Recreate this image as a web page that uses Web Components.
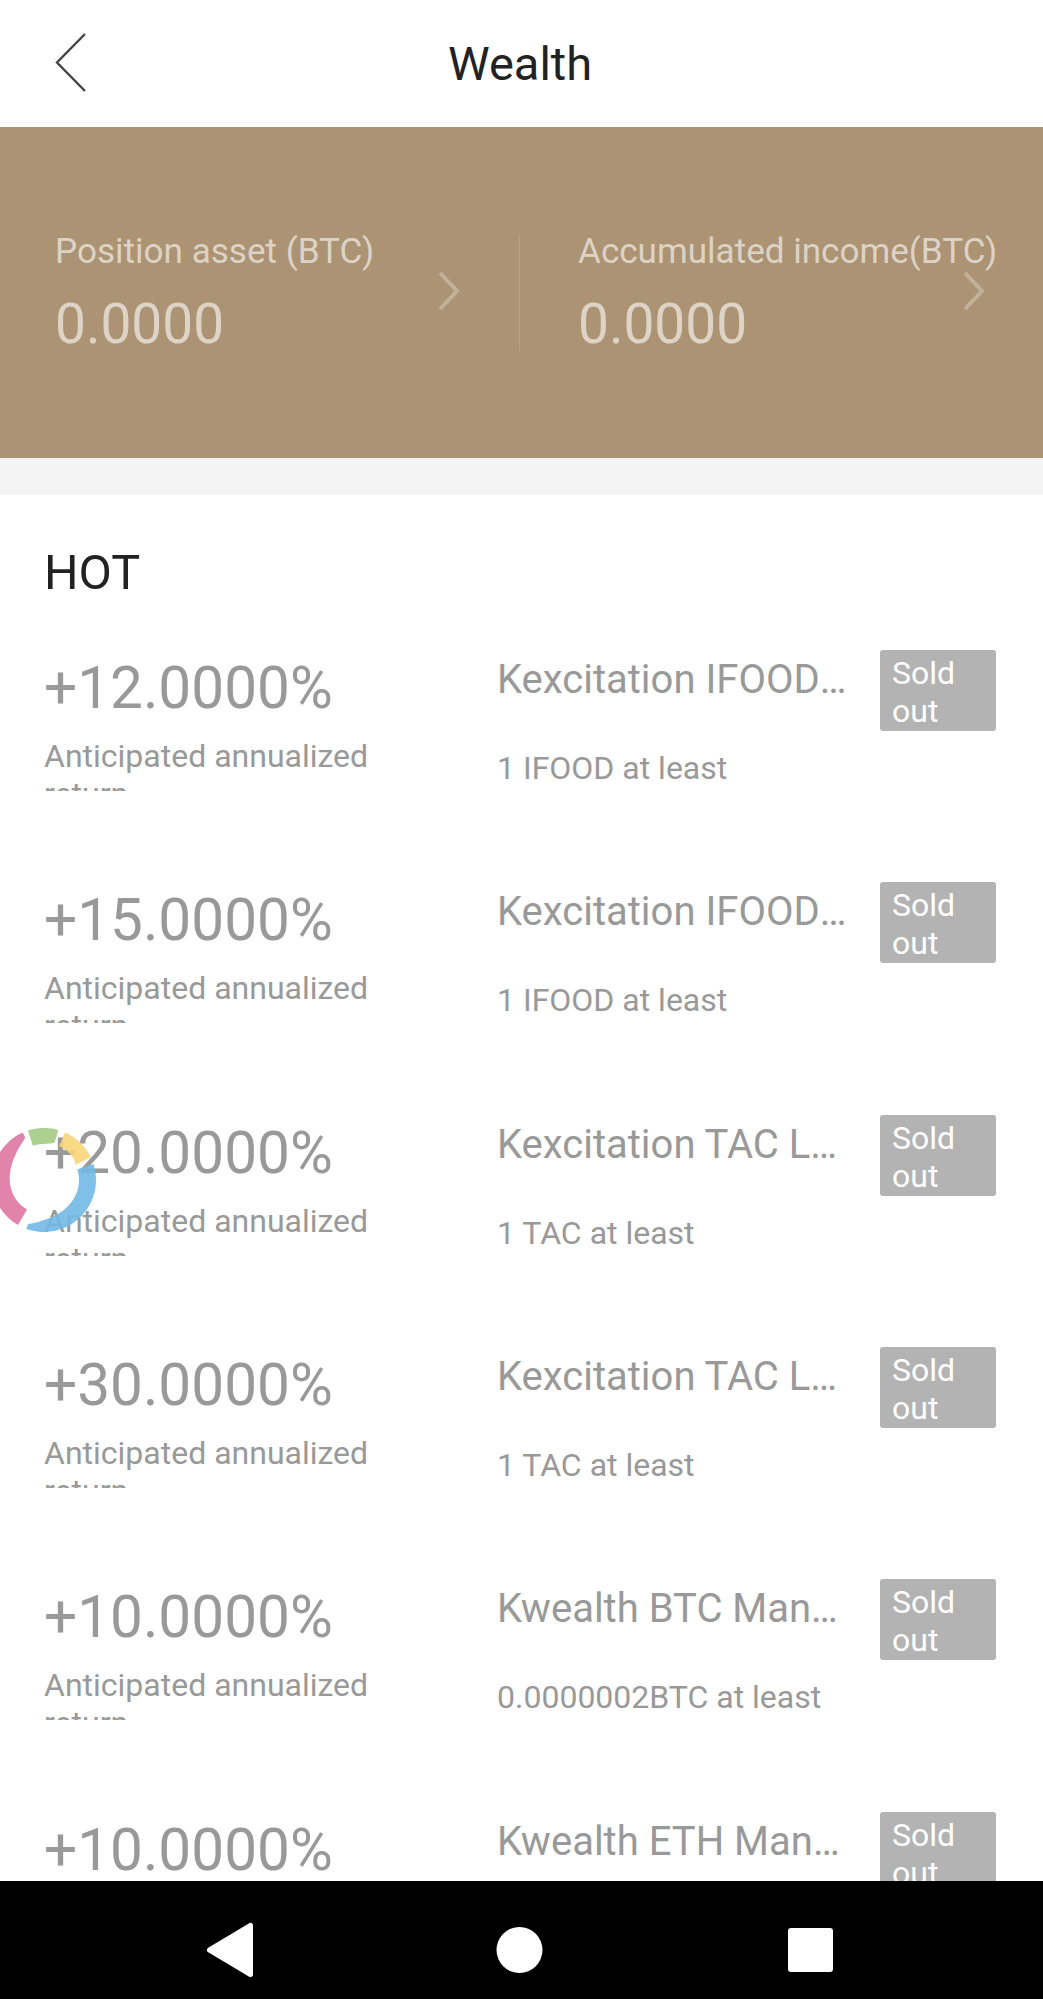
<!DOCTYPE html>
<html>
<head>
<meta charset="utf-8">
<title>Wealth</title>
<style>
html, body { margin: 0; padding: 0; background: #fff; }
body { font-family: Roboto, "Liberation Sans", sans-serif; }
</style>
</head>
<body>
<wealth-app>
    <wealth-header slot="header">Wealth</wealth-header>
    <balance-banner slot="banner">
        <balance-cell label="Position asset (BTC)" value="0.0000"></balance-cell>
        <balance-cell label="Accumulated income(BTC)" value="0.0000"></balance-cell>
    </balance-banner>
    <product-list slot="list" heading="HOT">
        <product-row rate="+12.0000%" name="Kexcitation IFOODLock" least="1 IFOOD at least"></product-row>
        <product-row rate="+15.0000%" name="Kexcitation IFOODLock" least="1 IFOOD at least"></product-row>
        <product-row rate="+20.0000%" name="Kexcitation TAC Lock-up" least="1 TAC at least"></product-row>
        <product-row rate="+30.0000%" name="Kexcitation TAC Lock-up" least="1 TAC at least"></product-row>
        <product-row rate="+10.0000%" name="Kwealth BTC Manager" least="0.0000002BTC at least"></product-row>
        <product-row rate="+10.0000%" name="Kwealth ETH Manager" least="0.0000002ETH at least"></product-row>
    </product-list>
    <loading-ring slot="overlay"></loading-ring>
    <nav-buttons slot="nav"></nav-buttons>
</wealth-app>

<script>
const appTemplate = document.createElement("template");
appTemplate.innerHTML = `
    <style>
    :host {
        display: flex;
        flex-direction: column;
        position: relative;
        height: 1999px;
        overflow: hidden;
        background: #fff;
        font-family: Roboto, "Liberation Sans", sans-serif;
    }
    .gap { height: 37px; flex: none; background: #f4f4f4; }
    .list { flex: 1; min-height: 0; overflow: hidden; }
    </style>
    <slot name="header"></slot>
    <slot name="banner"></slot>
    <div class="gap"></div>
    <div class="list"><slot name="list"></slot></div>
    <slot name="nav"></slot>
    <slot name="overlay"></slot>
`;

class WealthApp extends HTMLElement {
    constructor() {
        super();
        this.attachShadow({mode: "open"}).appendChild(appTemplate.content.cloneNode(true));
    }
}

const headerTemplate = document.createElement("template");
headerTemplate.innerHTML = `
    <style>
    :host {
        display: flex;
        flex: none;
        align-items: center;
        justify-content: center;
        position: relative;
        height: 127px;
        padding-right: 3px;
        color: #222;
        font-size: 47px;
        box-sizing: border-box;
    }
    svg { position: absolute; left: 54px; top: 33px; }
    </style>
    <svg width="33" height="60" viewBox="0 0 33 60" fill="none" stroke="#444" stroke-width="2.4">
        <path d="M31 1 L3 29.5 L31 58"/>
    </svg>
    <span><slot></slot></span>
`;

class WealthHeader extends HTMLElement {
    constructor() {
        super();
        this.attachShadow({mode: "open"}).appendChild(headerTemplate.content.cloneNode(true));
    }
}

const bannerTemplate = document.createElement("template");
bannerTemplate.innerHTML = `
    <style>
    :host {
        display: grid;
        grid-template-columns: 520px 523px;
        align-items: center;
        flex: none;
        height: 331px;
        background: #ab9373;
    }
    </style>
    <slot></slot>
`;

class BalanceBanner extends HTMLElement {
    constructor() {
        super();
        this.attachShadow({mode: "open"}).appendChild(bannerTemplate.content.cloneNode(true));
    }
}

const cellTemplate = document.createElement("template");
cellTemplate.innerHTML = `
    <style>
    :host {
        display: block;
        position: relative;
        box-sizing: border-box;
        height: 116px;
        padding-left: 55px;
        color: rgba(255,255,255,.6);
    }
    :host(:first-child) { border-right: 1px solid rgba(255,255,255,.14); }
    :host(:last-child) { padding-left: 58px; }
    .label { font-size: 35.1px; line-height: 40px; margin-top: -4px; white-space: nowrap; }
    .value { font-size: 55px; line-height: 64px; margin-top: 21px; }
    svg { position: absolute; right: 59px; top: 37px; }
    :host(:last-child) svg { right: 58px; }
    </style>
    <div class="label"></div>
    <div class="value"></div>
    <svg width="23" height="38" viewBox="0 0 23 38" fill="none" stroke="rgba(255,255,255,.28)" stroke-width="4">
        <path d="M3 1 L20 19 L3 37"/>
    </svg>
`;

class BalanceCell extends HTMLElement {
    constructor() {
        super();
        this.attachShadow({mode: "open"}).appendChild(cellTemplate.content.cloneNode(true));
        this.shadowRoot.querySelector(".label").textContent = this.getAttribute("label");
        this.shadowRoot.querySelector(".value").textContent = this.getAttribute("value");
    }
}

const listTemplate = document.createElement("template");
listTemplate.innerHTML = `
    <style>
    :host { display: block; padding: 0 47px 0 44px; }
    h2 {
        margin: 0;
        height: 155px;
        box-sizing: border-box;
        padding-top: 50px;
        font-size: 48.5px;
        line-height: 56px;
        font-weight: 400;
        color: #222;
    }
    </style>
    <h2></h2>
    <slot></slot>
`;

class ProductList extends HTMLElement {
    constructor() {
        super();
        this.attachShadow({mode: "open"}).appendChild(listTemplate.content.cloneNode(true));
        this.shadowRoot.querySelector("h2").textContent = this.getAttribute("heading");
    }
}

const rowTemplate = document.createElement("template");
rowTemplate.innerHTML = `
    <style>
    :host {
        display: grid;
        grid-template-columns: 453px 1fr 116px;
        height: 232.33px;
        color: #999;
    }
    .left { height: 141px; overflow: hidden; }
    .rate { font-size: 58.5px; line-height: 68px; margin-top: 4px; white-space: nowrap; }
    .tip { font-size: 32px; line-height: 38px; margin-top: 15px; width: 330px; }
    .name {
        font-size: 40px;
        line-height: 46px;
        width: 360px;
        margin-top: 7px;
        white-space: nowrap;
        overflow: hidden;
        text-overflow: ellipsis;
    }
    .least { font-size: 32px; line-height: 38px; margin-top: 46px; white-space: nowrap; }
    .badge {
        box-sizing: border-box;
        height: 81px;
        padding: 4px 12px;
        border-radius: 3px;
        background: #b3b3b3;
        color: #fff;
        font-size: 32px;
        line-height: 38px;
        overflow: hidden;
    }
    </style>
    <div class="left">
        <div class="rate"></div>
        <div class="tip">Anticipated annualized return</div>
    </div>
    <div>
        <div class="name"></div>
        <div class="least"></div>
    </div>
    <div class="badge">Sold out</div>
`;

class ProductRow extends HTMLElement {
    constructor() {
        super();
        this.attachShadow({mode: "open"}).appendChild(rowTemplate.content.cloneNode(true));
        this.shadowRoot.querySelector(".rate").textContent = this.getAttribute("rate");
        this.shadowRoot.querySelector(".name").textContent = this.getAttribute("name");
        this.shadowRoot.querySelector(".least").textContent = this.getAttribute("least");
    }
}

const ringTemplate = document.createElement("template");
ringTemplate.innerHTML = `
    <style>
    :host { position: absolute; left: -9px; top: 1127px; width: 106px; height: 106px; }
    svg { display: block; opacity: .9; filter: blur(.5px); }
    </style>
    <svg width="106" height="106" viewBox="-53 -53 106 106"></svg>
`;

// color, start and end in degrees clockwise from the top, band width at each end
const ringArcs = [
    ["#de76a3", 210, 336, 18, 6],
    ["#a4cb85", 342, 376, 16, 13],
    ["#73b9e6", 72, 200, 17, 5],
    ["#f9d57a", 24, 64, 15, 17]
];

function ringPath(from, to, startWidth, endWidth) {
    const outer = [], inner = [];
    for (let i = 0; i <= 24; i++) {
        const t = i / 24;
        const angle = (from + (to - from) * t) * Math.PI / 180;
        // the band keeps its width for most of the arc and narrows near the end
        const band = startWidth + (endWidth - startWidth) * Math.pow(t, 5);
        const x = Math.sin(angle), y = -Math.cos(angle);
        outer.push((x * 52).toFixed(1) + " " + (y * 52).toFixed(1));
        inner.unshift((x * (52 - band)).toFixed(1) + " " + (y * (52 - band)).toFixed(1));
    }
    return "M" + outer.concat(inner).join(" L") + " Z";
}

class LoadingRing extends HTMLElement {
    constructor() {
        super();
        this.attachShadow({mode: "open"}).appendChild(ringTemplate.content.cloneNode(true));
        const svg = this.shadowRoot.querySelector("svg");
        ringArcs.forEach(([color, from, to, startWidth, endWidth]) => {
            const arc = document.createElementNS("http://www.w3.org/2000/svg", "path");
            arc.setAttribute("d", ringPath(from, to, startWidth, endWidth));
            arc.setAttribute("fill", color);
            svg.appendChild(arc);
        });
    }
}

const navTemplate = document.createElement("template");
navTemplate.innerHTML = `
    <style>
    :host {
        display: block;
        flex: none;
        height: 118px;
        background: #000;
    }
    svg { display: block; }
    </style>
    <svg width="1043" height="118" viewBox="0 0 1043 118" fill="#fff">
        <polygon points="250.5,44.5 250.5,93.5 209.5,69" stroke="#fff" stroke-width="5" stroke-linejoin="round"/>
        <circle cx="519.5" cy="69" r="23"/>
        <rect x="788" y="47" width="45" height="44" rx="3"/>
    </svg>
`;

class NavButtons extends HTMLElement {
    constructor() {
        super();
        this.attachShadow({mode: "open"}).appendChild(navTemplate.content.cloneNode(true));
    }
}

customElements.define("wealth-app", WealthApp);
customElements.define("wealth-header", WealthHeader);
customElements.define("balance-banner", BalanceBanner);
customElements.define("balance-cell", BalanceCell);
customElements.define("product-list", ProductList);
customElements.define("product-row", ProductRow);
customElements.define("loading-ring", LoadingRing);
customElements.define("nav-buttons", NavButtons);
</script>
</body>
</html>
